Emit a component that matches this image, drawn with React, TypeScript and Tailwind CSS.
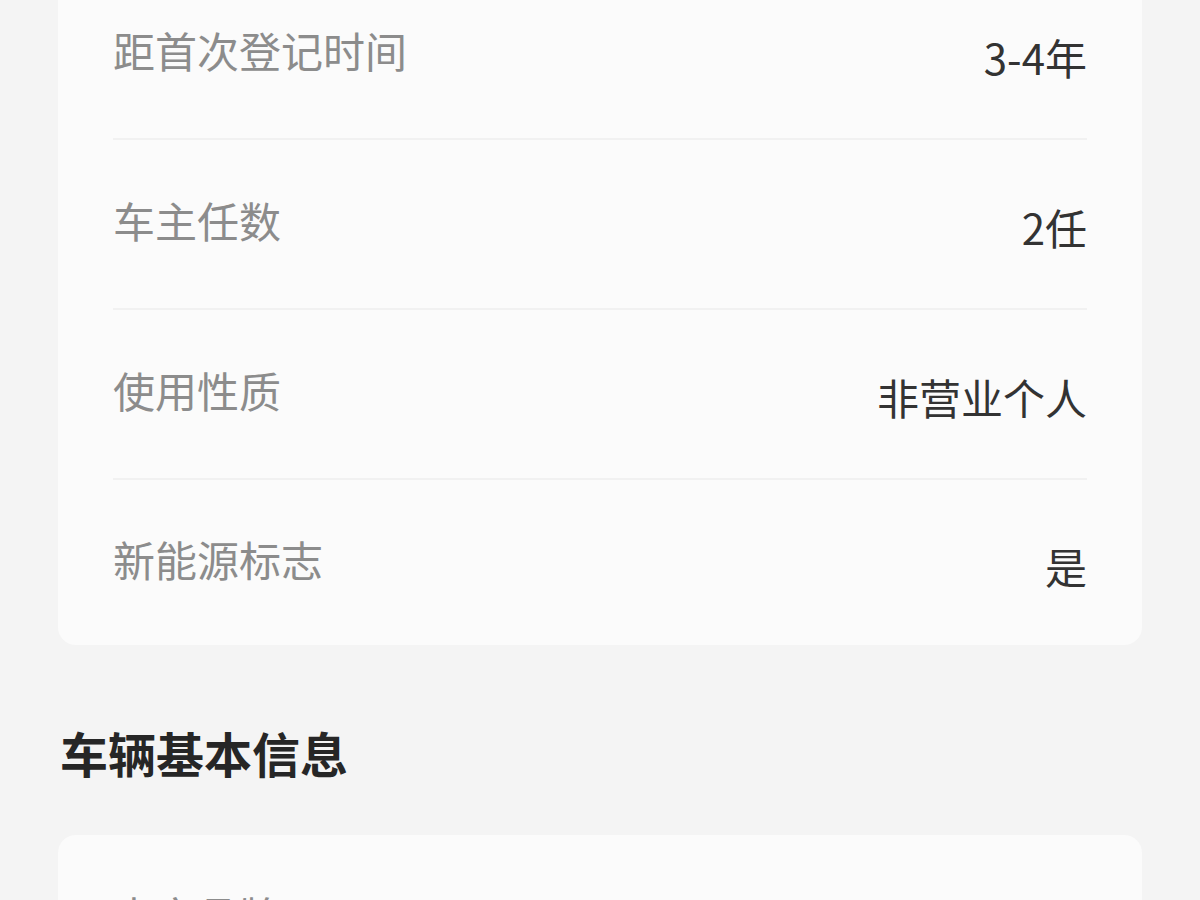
const registration = [
  { label: "距首次登记时间", value: "3-4年" },
  { label: "车主任数", value: "2任" },
  { label: "使用性质", value: "非营业个人" },
  { label: "新能源标志", value: "是" },
];

const basicInfo = [{ label: "中文品牌", value: "特斯拉" }];

function InfoRow({ label, value, last }: { label: string; value: string; last?: boolean }) {
  return (
    <div
      className={`mx-[55px] flex items-center justify-between ${
        last ? "h-[165px]" : "h-[170px] border-b-2 border-[#f1f1f1]"
      }`}
    >
      <span className="-mt-[8px] text-[42px] leading-none text-[#8c8c8c]">{label}</span>
      <span className="mt-[6px] text-[42px] leading-none text-[#333333]">{value}</span>
    </div>
  );
}

export default function App() {
  return (
    <div className="h-[900px] overflow-hidden bg-[#f4f4f4] px-[58px] font-['Noto_Sans_CJK_SC',sans-serif]">
      {/* 登记信息 */}
      <div className="-mt-[30px] rounded-[18px] bg-[#fbfbfb]">
        {registration.map((row, i) => (
          <InfoRow key={row.label} {...row} last={i === registration.length - 1} />
        ))}
      </div>

      <h2 className="mt-[83px] pl-[2px] text-[48px] font-bold leading-[48px] text-[#262626]">车辆基本信息</h2>

      <div className="mt-[59px] rounded-[18px] bg-[#fbfbfb]">
        {basicInfo.map((row) => (
          <InfoRow key={row.label} {...row} />
        ))}
      </div>
    </div>
  );
}
